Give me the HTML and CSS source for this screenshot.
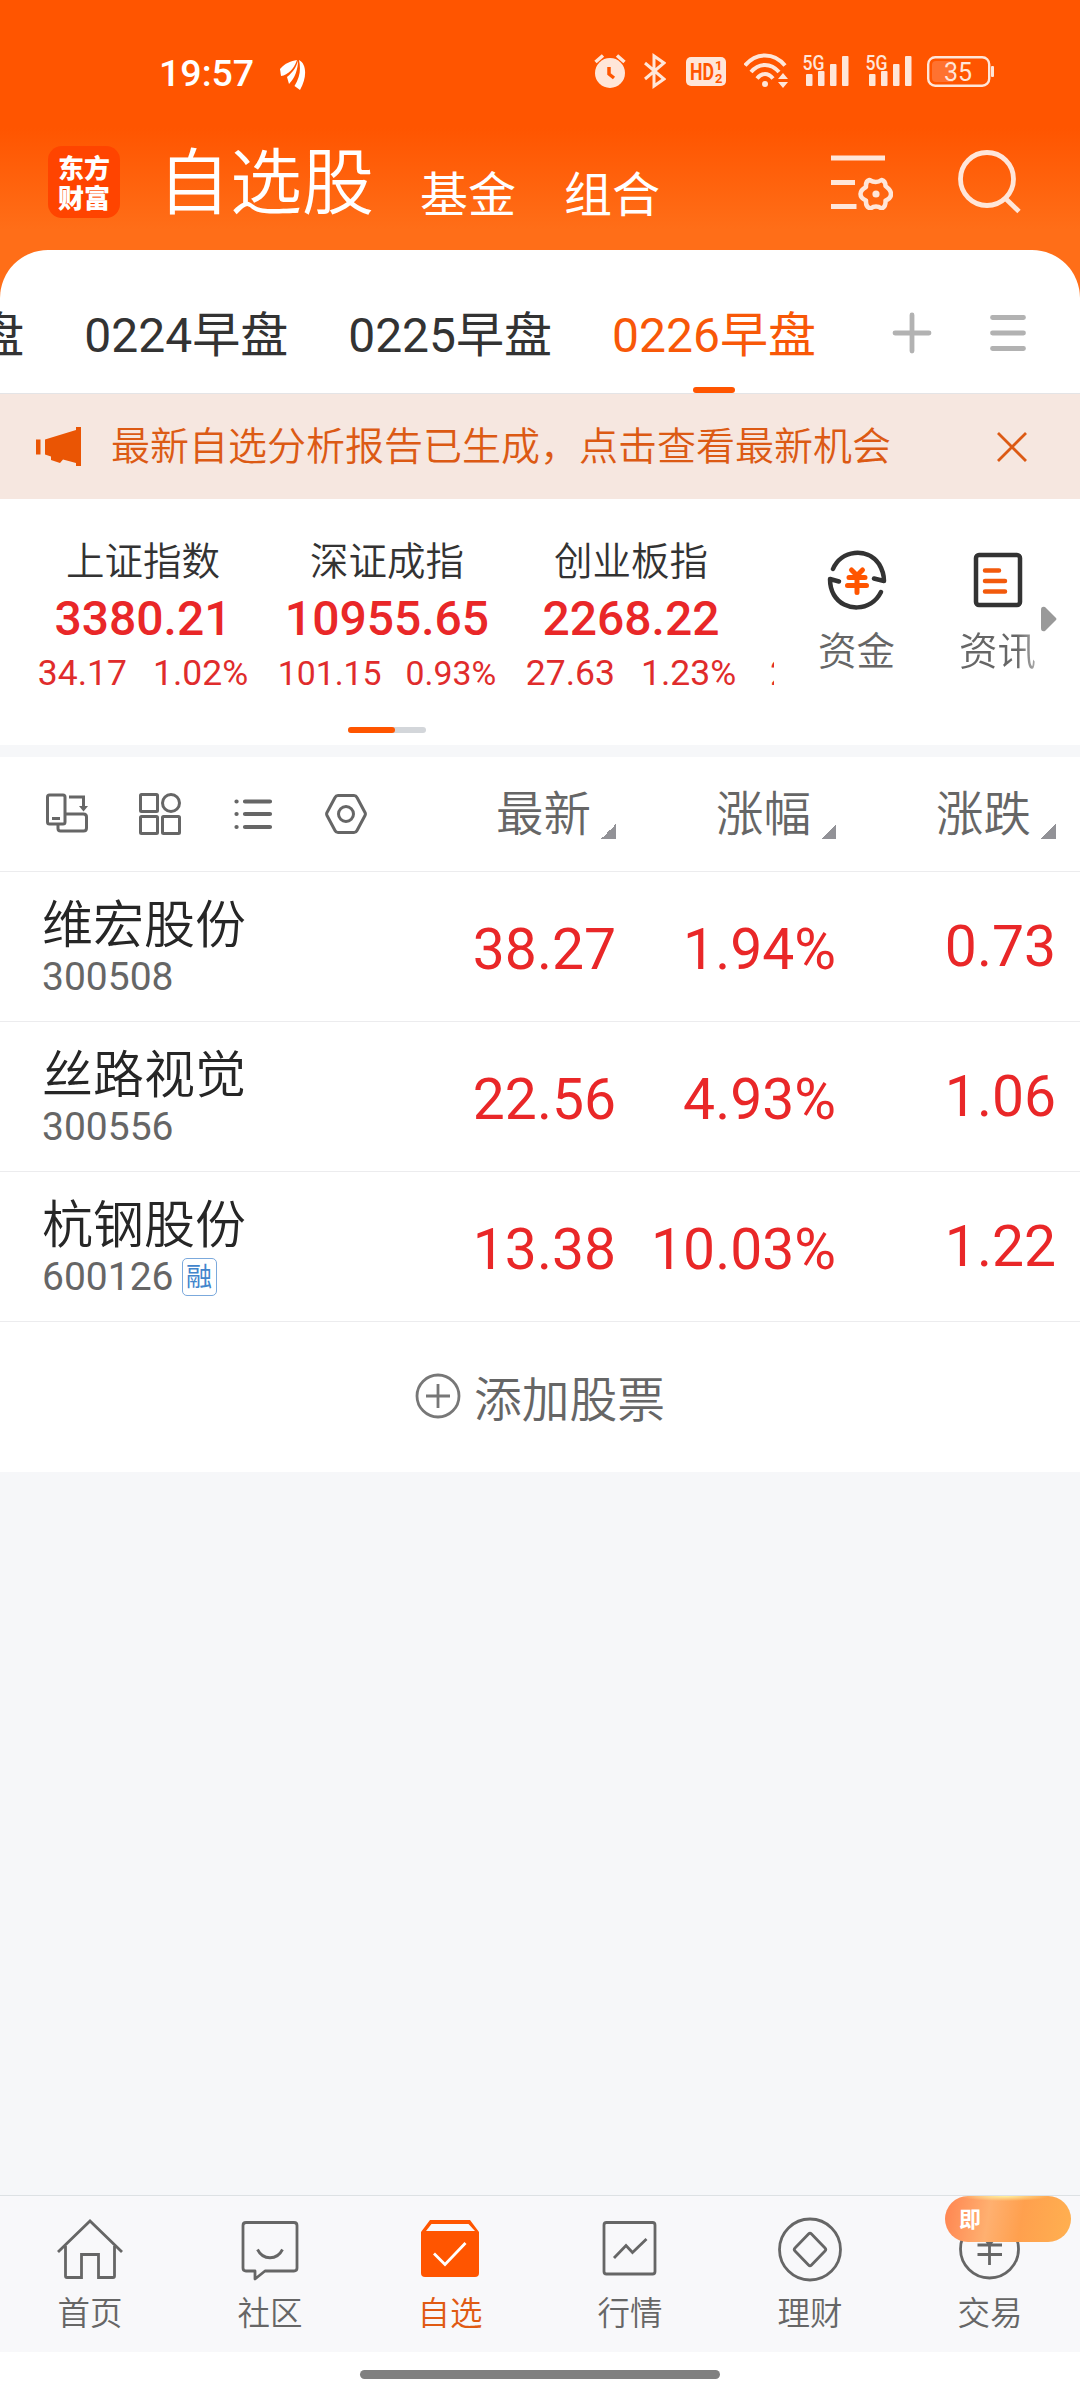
FILE: index.html
```html
<!DOCTYPE html>
<html lang="zh-CN">
  <head>
    <meta charset="UTF-8" />
    <meta name="viewport" content="width=device-width, initial-scale=1.0" />
    <title>自选股</title>
    <link rel="stylesheet" href="styles.css">
  </head>

  <body>
    <header class="top">
      <div class="status">
        <span class="time">19:57</span>
        <svg class="leaf" width="26" height="30" viewBox="0 0 26 30" fill="#fff">
          <path d="M0 9C5 3 11 1 17 0C14 9 8 15 1 16Z" />
          <path d="M18 0.500C18 9 15 18 9 24L7 17C13 12 16 8 18 0.500Z" />
          <path d="M19 0C27 4 27 18 20 30L14.500 26C20 17 21 9 19 0Z" />
        </svg>
        <div class="status-icons">
          <svg class="s-alarm" width="32" height="36" viewBox="0 0 32 36">
            <circle cx="16" cy="20" r="15" fill="#ffe6d9" />
            <path d="M1.500 9L9 2.500M30.500 9L23 2.500" stroke="#ffe6d9" stroke-width="3.500" />
            <path d="M15 14V21L20 25" fill="none" stroke="#ff5500" stroke-width="3.500" />
          </svg>
          <svg class="s-bt" width="22" height="36" viewBox="0 0 22 36" fill="none" stroke="#ffe6d9" stroke-width="3">
            <path d="M1 10L20 26L10 33V3L20 10L1 26" />
          </svg>
          <svg class="s-hd" width="40" height="36" viewBox="0 0 40 36">
            <rect x="0" y="4" width="40" height="29" rx="5" fill="#ffe6d9" />
            <text x="4" y="27" class="hd-text" textLength="24" lengthAdjust="spacingAndGlyphs">HD</text>
            <text x="29" y="17" class="hd-num">1</text>
            <text x="29" y="30" class="hd-num">2</text>
          </svg>
          <svg class="s-wifi" width="45" height="36" viewBox="0 0 45 36" fill="none" stroke="#ffe6d9" stroke-width="4">
            <path d="M1 12.500C12 -1 30 -1 41 12.500M7 19C15 9.500 27 9.500 35 19M13 25.500C18 19.500 24 19.500 29 25.500" />
            <circle cx="21" cy="31" r="3" fill="#ffe6d9" stroke="none" />
            <path d="M34 26L39 20L44 26ZM34 29L39 35L44 29Z" fill="#ffe6d9" stroke="none" />
          </svg>
          <svg class="s-sim" width="48" height="36" viewBox="0 0 48 36" fill="#ffe6d9">
            <text x="0.500" y="17" class="sim-text" textLength="22" lengthAdjust="spacingAndGlyphs">5G</text>
            <rect x="4" y="21" width="6.500" height="12" rx="1" />
            <rect x="16" y="18" width="6.500" height="15" rx="1" />
            <rect x="28" y="11" width="6.500" height="22" rx="1" />
            <rect x="40" y="3" width="6.500" height="30" rx="1" />
          </svg>
          <svg class="s-sim" width="48" height="36" viewBox="0 0 48 36" fill="#ffe6d9">
            <text x="0.500" y="17" class="sim-text" textLength="22" lengthAdjust="spacingAndGlyphs">5G</text>
            <rect x="4" y="21" width="6.500" height="12" rx="1" />
            <rect x="16" y="18" width="6.500" height="15" rx="1" />
            <rect x="28" y="11" width="6.500" height="22" rx="1" />
            <rect x="40" y="3" width="6.500" height="30" rx="1" />
          </svg>
          <svg class="s-bat" width="68" height="36" viewBox="0 0 68 36">
            <rect x="1.200" y="4.200" width="61" height="28.500" rx="7" fill="none" stroke="#ffe6d9" stroke-width="2.400" />
            <path d="M9 8H26V29H9Q5 29 5 25V12Q5 8 9 8Z" fill="#ff7230" />
            <rect x="64" y="13" width="3" height="11" rx="1" fill="#ffe6d9" />
            <text x="17" y="27.500" class="bat-text">35</text>
          </svg>
        </div>
      </div>

      <div class="nav-top">
        <div class="logo"><span>东方</span><span>财富</span></div>
        <div class="title">自选股</div>
        <div class="link">基金</div>
        <div class="link">组合</div>
        <svg class="i-filter" width="62" height="60" viewBox="0 0 62 60" fill="none" stroke="#ffe6d9" stroke-width="5">
          <path d="M0 8H54M0 32.500H24M0 56.500H25.500" />
          <path stroke-width="4.500" stroke-linejoin="round" d="M38.500 30Q45 34 50.500 30Q54.500 31 54.500 36Q60 40 60 44Q60 48.500 54.500 50.500Q55 57 50.500 58.500Q45 54.500 39.500 58.500Q34.500 57 35 50.500Q29.500 48 29.500 44Q29.500 40 35 37Q34.500 31 38.500 30Z" />
          <circle cx="45" cy="44" r="3.600" fill="#ffe6d9" stroke="none" />
        </svg>
        <svg class="i-search" width="64" height="66" viewBox="0 0 64 66" fill="none" stroke="#ffe6d9" stroke-width="4.800">
          <circle cx="29" cy="30" r="26.500" />
          <path d="M47 49L61 62.500" />
        </svg>
      </div>
    </header>

    <section class="tabs">
      <div class="tab-list">
        <div class="tab">盘</div>
        <div class="tab">0224早盘</div>
        <div class="tab">0225早盘</div>
        <div class="tab active">0226早盘</div>
      </div>
      <svg class="i-plus" width="40" height="42" viewBox="0 0 40 42" stroke="#b2b2b2" stroke-width="4.800" stroke-linecap="round">
        <path d="M20 3V39M3 21H37" />
      </svg>
      <svg class="i-menu" width="36" height="42" viewBox="0 0 36 42" stroke="#b2b2b2" stroke-width="4.800" stroke-linecap="round">
        <path d="M2.500 5.500H33.500M2.500 21H33.500M2.500 36.500H33.500" />
      </svg>
    </section>

    <section class="notice">
      <svg width="46" height="40" viewBox="0 0 46 40" fill="#ea5504">
        <path d="M0 12.500H4.500V27.500H0ZM9 12.500L40 3V0H45V39H40V36L27 32.500L24 36L15 33V29.500L9 27.500Z" />
      </svg>
      <p>最新自选分析报告已生成，点击查看最新机会</p>
      <svg class="close" width="30" height="30" viewBox="0 0 30 30" stroke="#dc5a14" stroke-width="2.800">
        <path d="M1 1L29 29M29 1L1 29" />
      </svg>
    </section>

    <section class="market">
      <div class="index-box">
        <div class="index-list">
          <div class="index">
            <div class="index-name">上证指数</div>
            <div class="index-val">3380.21</div>
            <div class="index-chg"><span>34.17</span><span>1.02%</span></div>
          </div>
          <div class="index">
            <div class="index-name">深证成指</div>
            <div class="index-val">10955.65</div>
            <div class="index-chg small"><span>101.15</span><span>0.93%</span></div>
          </div>
          <div class="index">
            <div class="index-name">创业板指</div>
            <div class="index-val">2268.22</div>
            <div class="index-chg"><span>27.63</span><span>1.23%</span></div>
          </div>
          <div class="index next">
            <div class="index-chg"><span>2</span></div>
          </div>
        </div>
        <div class="pager"><i></i></div>
      </div>
      <div class="quick">
        <div class="quick-item">
          <svg width="60" height="60" viewBox="0 0 60 60" fill="none" stroke="#333" stroke-width="4.500" stroke-linecap="round" stroke-linejoin="round">
            <path d="M6 19C14 0 40 -3 52 14C55 19 57 24 57 31L47 28.500" />
            <path d="M54 42C44 62 17 62 7 45C4 40 3 35 3 29L12 31.500" />
            <path stroke="#ff5500" stroke-width="5" d="M24.500 20L30 25.500L35.500 20M22 27.500H38M20.500 35.500H39.500M30 26V42.500" />
          </svg>
          <span>资金</span>
        </div>
        <div class="quick-item">
          <svg width="60" height="60" viewBox="0 0 60 60" fill="none" stroke-width="4.500" stroke-linecap="round">
            <rect x="8" y="5" width="44" height="50" rx="3" stroke="#333" />
            <path stroke="#f25a0c" d="M17 20.500H31M17 31H37M17 41.500H37" />
          </svg>
          <span>资讯</span>
        </div>
        <svg class="more" width="16" height="26" viewBox="0 0 16 26" fill="#999">
          <path d="M0 4Q0 0 4 1L15 12Q16 13 15 14L4 25Q0 26 0 22Z" />
        </svg>
      </div>
    </section>

    <section class="stocks">
      <div class="row head">
        <div class="tools">
          <svg width="42" height="42" viewBox="0 0 42 42" fill="none" stroke="#666" stroke-width="3">
            <rect x="1.500" y="2" width="17.500" height="29" rx="2" />
            <path d="M6 25.500H14M23 4H37.500V14" />
            <path d="M33 13L37.500 18.500L42 13Z" fill="#666" stroke="none" />
            <path d="M12 32V35.500Q12 38 14.500 38H37.500Q40.500 38 40.500 35V24Q40.500 21 37.500 21H20" />
          </svg>
          <svg width="42" height="42" viewBox="0 0 42 42" fill="none" stroke="#666" stroke-width="3">
            <rect x="1.500" y="1.500" width="17" height="17" rx="1" />
            <rect x="1.500" y="23.500" width="17" height="17" rx="1" />
            <rect x="23.500" y="23.500" width="17" height="17" rx="1" />
            <circle cx="32" cy="10" r="8.500" />
          </svg>
          <svg width="42" height="42" viewBox="0 0 42 42" stroke="#666" stroke-width="4.200" stroke-linecap="round">
            <path d="M13 8.500H38M13 21H38M13 34H38M4.500 8.500H4.600M4.500 21H4.600M4.500 34H4.600" />
          </svg>
          <svg width="42" height="42" viewBox="0 0 42 42" fill="none" stroke="#666" stroke-width="3">
            <path d="M13 2.500H29Q31 2.500 32 4.500L40 19.500Q40.800 21 40 22.500L32 37.500Q31 39.500 29 39.500H13Q11 39.500 10 37.500L2 22.500Q1.200 21 2 19.500L10 4.500Q11 2.500 13 2.500Z" />
            <circle cx="21" cy="21" r="7.500" />
          </svg>
        </div>
        <div class="col price">最新<i></i></div>
        <div class="col pct">涨幅<i></i></div>
        <div class="col diff">涨跌<i></i></div>
      </div>

      <div class="row">
        <div class="stock">
          <div class="stock-name">维宏股份</div>
          <div class="stock-code">300508</div>
        </div>
        <div class="price">38.27</div>
        <div class="pct">1.94%</div>
        <div class="diff">0.73</div>
      </div>
      <div class="row">
        <div class="stock">
          <div class="stock-name">丝路视觉</div>
          <div class="stock-code">300556</div>
        </div>
        <div class="price">22.56</div>
        <div class="pct">4.93%</div>
        <div class="diff">1.06</div>
      </div>
      <div class="row">
        <div class="stock">
          <div class="stock-name">杭钢股份</div>
          <div class="stock-code">600126<span class="tag">融</span></div>
        </div>
        <div class="price">13.38</div>
        <div class="pct">10.03%</div>
        <div class="diff">1.22</div>
      </div>

      <div class="add">
        <svg width="46" height="46" viewBox="0 0 46 46" fill="none" stroke="#777" stroke-width="2.800">
          <circle cx="23" cy="23" r="21" />
          <path d="M23 11V35M11 23H35" />
        </svg>
        <span>添加股票</span>
      </div>
    </section>

    <nav class="tabbar">
      <div class="item">
        <svg width="66" height="66" viewBox="0 0 66 66" fill="none" stroke="#666" stroke-width="2.800">
          <path d="M1 36L33 5L65 36M8.500 30V60Q8.500 61.500 10 61.500H24.500V38.500H41.500V61.500H56Q57.500 61.500 57.500 60V30" />
        </svg>
        <span>首页</span>
      </div>
      <div class="item">
        <svg width="66" height="66" viewBox="0 0 66 66" fill="none" stroke="#666" stroke-width="2.800">
          <path d="M9 6.500H57Q60 6.500 60 9.500V52Q60 55 57 55H28L18 63V55H9Q6 55 6 52V9.500Q6 6.500 9 6.500Z" stroke-linejoin="round" />
          <path d="M20.500 33.500C26 44.500 40 44.500 45.500 33.500" />
        </svg>
        <span>社区</span>
      </div>
      <div class="item on">
        <svg width="66" height="66" viewBox="0 0 66 66" fill="none">
          <path d="M4 16L13 4H53L62 16V57Q62 61 58 61H8Q4 61 4 57Z" fill="#ff5500" />
          <path d="M14.500 8H51.500L58 15H9Z" fill="#f8f8fa" />
          <path d="M17 37.500L28 48.500L48.500 27" stroke="#fff" stroke-width="2.800" />
        </svg>
        <span>自选</span>
      </div>
      <div class="item">
        <svg width="66" height="66" viewBox="0 0 66 66" fill="none" stroke="#666" stroke-width="2.800">
          <rect x="7" y="6.500" width="51" height="51.500" rx="2.500" />
          <path d="M17 42L29 29.500L35.500 36.500L49.500 23" />
        </svg>
        <span>行情</span>
      </div>
      <div class="item">
        <svg width="66" height="66" viewBox="0 0 66 66" fill="none" stroke="#666" stroke-width="2.800">
          <circle cx="33" cy="33.500" r="30.500" />
          <path d="M31.500 18Q33 16.500 34.500 18L48 32Q49.500 33.500 48 35L34.500 49Q33 50.500 31.500 49L18 35Q16.500 33.500 18 32Z" />
        </svg>
        <span>理财</span>
      </div>
      <div class="item">
        <svg width="66" height="66" viewBox="0 0 66 66" fill="none" stroke="#666" stroke-width="2.800">
          <circle cx="32.500" cy="33" r="29" />
          <path d="M24 18L32.500 28.500L41 18M20.500 29H45M20.500 38.500H45M32.500 28V49" />
        </svg>
        <span>交易</span>
        <b class="bubble">即</b>
      </div>
    </nav>
    <div class="home-bar"><i></i></div>
  </body>
</html>
```

FILE: styles.css
```css
* {
  box-sizing: border-box;
  margin: 0;
  padding: 0;
}

body {
  display: flex;
  flex-direction: column;
  height: 2400px;
  overflow: hidden;
  background-color: #f6f7f9;
  font-family: Roboto, "Noto Sans CJK SC", sans-serif;
  font-weight: 400;
  color: #333;
}

svg {
  display: block;
  flex: none;
}

/* header */
.top {
  height: 298px;
  margin-bottom: -48px;
  background: linear-gradient(#ff5500 128px, #ff6e18 230px);
  color: #fff;
}

.status {
  display: flex;
  height: 128px;
  padding: 53px 85px 0 159px;
}

.time {
  width: 123px;
  height: 38px;
  line-height: 40px;
  font-size: 37.500px;
  font-weight: 500;
}

.leaf {
  margin-top: 7px;
}

.status-icons {
  display: flex;
  margin-left: 288px;
}

.s-bt {
  margin-left: 18px;
}

.s-hd {
  margin-left: 20px;
}

.s-wifi {
  margin-left: 18px;
}

.s-sim {
  margin-left: 13px;
}

.s-sim + .s-sim {
  margin-left: 15px;
}

.s-bat {
  margin-left: 14px;
}

.hd-text {
  font: 700 24px Roboto;
  fill: #ff5500;
}

.hd-num {
  font: 700 13px Roboto;
  fill: #ff5500;
}

.sim-text {
  font: 500 20px Roboto;
}

.bat-text {
  font: 400 25px Roboto;
  fill: #ffe6d9;
}

.nav-top {
  display: flex;
  height: 122px;
  padding-left: 48px;
}

.logo {
  display: flex;
  flex-direction: column;
  align-items: center;
  width: 72px;
  height: 72px;
  margin: 18px 38px 0 0;
  padding-top: 6px;
  border-radius: 14px;
  background-color: #ff4400;
  font: 900 26px/30px "Noto Sans CJK SC", sans-serif;
}

.title {
  margin-right: 46px;
  line-height: 112px;
  font-size: 72px;
  font-weight: 350;
}

.link {
  width: 96px;
  margin-right: 48px;
  line-height: 136px;
  font-size: 48px;
}

.i-filter {
  margin: 22px 0 0 123px;
}

.i-search {
  margin: 21px 0 0 65px;
}

/* tabs */
.tabs {
  display: flex;
  height: 144px;
  border-bottom: 1px solid #e4e4e6;
  border-radius: 48px 48px 0 0;
  background-color: #fff;
  overflow: hidden;
}

.tab-list {
  display: flex;
  justify-content: flex-end;
  gap: 60px;
  width: 816px;
  overflow: hidden;
}

.tab {
  position: relative;
  flex: none;
  line-height: 172px;
  font-size: 48px;
}

.active {
  color: #f85808;
}

.active::after {
  content: "";
  position: absolute;
  left: 81px;
  top: 137px;
  width: 42px;
  height: 6px;
  border-radius: 3px;
  background-color: #ff5500;
}

.i-plus {
  margin: 62px 0 0 76px;
}

.i-menu {
  margin: 62px 0 0 58px;
}

/* notice */
.notice {
  display: flex;
  align-items: center;
  height: 105px;
  padding: 0 53px 0 36px;
  background-color: #f6e7e0;
  color: #dc5a14;
}

.notice p {
  margin-left: 29px;
  font-size: 39px;
  line-height: 60px;
  font-weight: 350;
}

.close {
  margin-left: auto;
}

/* indexes */
.market {
  display: flex;
  height: 246px;
  background-color: #fff;
}

.index-box {
  width: 774px;
  overflow: hidden;
}

.index-list {
  display: flex;
  height: 228px;
  padding: 36px 0 0 21px;
}

.index {
  flex: none;
  width: 244px;
  text-align: center;
}

.index-name {
  font-size: 38.500px;
  line-height: 53px;
  font-weight: 350;
}

.index-val {
  margin-top: 3px;
  font-size: 48px;
  line-height: 56px;
  font-weight: 500;
  color: #e92728;
}

.index-chg {
  display: flex;
  justify-content: center;
  gap: 26px;
  margin-top: 4px;
  line-height: 44px;
  font-size: 35.500px;
  color: #e02c2c;
}

.small {
  gap: 24px;
  font-size: 33.800px;
  line-height: 46px;
}

.next .index-chg {
  justify-content: flex-start;
  margin: 116px 0 0 17px;
}

.pager {
  width: 78px;
  height: 6px;
  margin-left: 348px;
  border-radius: 3px;
  background-color: #d3d6da;
}

.pager i {
  display: block;
  width: 47px;
  height: 6px;
  border-radius: 3px;
  background-color: #ff5500;
}

.quick {
  display: flex;
  padding: 51px 0 0 12px;
}

.quick-item {
  display: flex;
  flex-direction: column;
  align-items: center;
  width: 141px;
  color: #666;
}

.quick-item span {
  margin-top: 14px;
  line-height: 56px;
  font-size: 38.500px;
  font-weight: 350;
}

.quick-item + .quick-item span {
  background: linear-gradient(90deg, #666 75%, #aaa);
  background-clip: text;
  color: transparent;
}

.more {
  margin: 56px 0 0 -27px;
}

/* stock table */
.stocks {
  margin-top: 12px;
  background-color: #fff;
}

.row {
  display: grid;
  grid-template-columns: 360px 256px 220px 220px;
  height: 150px;
  border-bottom: 1px solid #ececee;
}

.head {
  height: 115px;
}

.tools {
  display: flex;
  gap: 51px;
  padding: 36px 0 0 46px;
}

.col {
  display: flex;
  justify-content: flex-end;
}

.head .col {
  font-size: 47.500px;
  line-height: 116px;
  font-weight: 350;
  color: #666;
}

.col i {
  width: 15px;
  height: 15px;
  margin: 67px 0 0 10px;
  background: linear-gradient(135deg, transparent 50%, #929297 50%);
}

.stock {
  padding: 27px 0 0 42px;
}

.stock-name {
  font-size: 51px;
  line-height: 54px;
  font-weight: 350;
  color: #262626;
}

.stock-code {
  display: flex;
  align-items: center;
  margin-top: 1px;
  font-size: 39px;
  line-height: 46px;
  color: #666;
}

.tag {
  width: 35px;
  height: 38px;
  margin-left: 8px;
  border: 1.500px solid #7ba9dc;
  border-radius: 5px;
  font-size: 26px;
  line-height: 36px;
  text-align: center;
  color: #4285cc;
}

.price,
.pct,
.diff {
  text-align: right;
  font-size: 57px;
  line-height: 155px;
  color: #e92728;
}

.diff {
  line-height: 149px;
}

.add {
  display: flex;
  align-items: center;
  justify-content: center;
  gap: 13px;
  height: 150px;
  padding-bottom: 2px;
  font-size: 47.800px;
  font-weight: 350;
  color: #666;
}

/* bottom bar */
.tabbar {
  display: flex;
  height: 157px;
  margin-top: auto;
  border-top: 1px solid #dde1e4;
  background-color: #f8f8fa;
}

.item {
  position: relative;
  display: flex;
  flex-direction: column;
  align-items: center;
  width: 180px;
  padding-top: 20px;
  color: #666;
}

.item span {
  margin-top: 13px;
  font-size: 32.500px;
  line-height: 38px;
  font-weight: 350;
}

.on {
  color: #e05a12;
}

.bubble {
  position: absolute;
  left: 45px;
  top: 0;
  width: 126px;
  height: 46px;
  padding-left: 14px;
  border-radius: 23px;
  background: radial-gradient(ellipse 45px 5px at 60px 0, #fff3a0, transparent), linear-gradient(100deg, #ff8450, #ffb070 35%, #ffa04e 60%, #ffb050);
  font-size: 22px;
  line-height: 48px;
  font-weight: 700;
  color: #fff;
}

.home-bar {
  height: 48px;
  padding-top: 18px;
  background-color: #fff;
}

.home-bar i {
  display: block;
  width: 360px;
  height: 9px;
  margin: 0 auto;
  border-radius: 5px;
  background-color: #808080;
}
```
